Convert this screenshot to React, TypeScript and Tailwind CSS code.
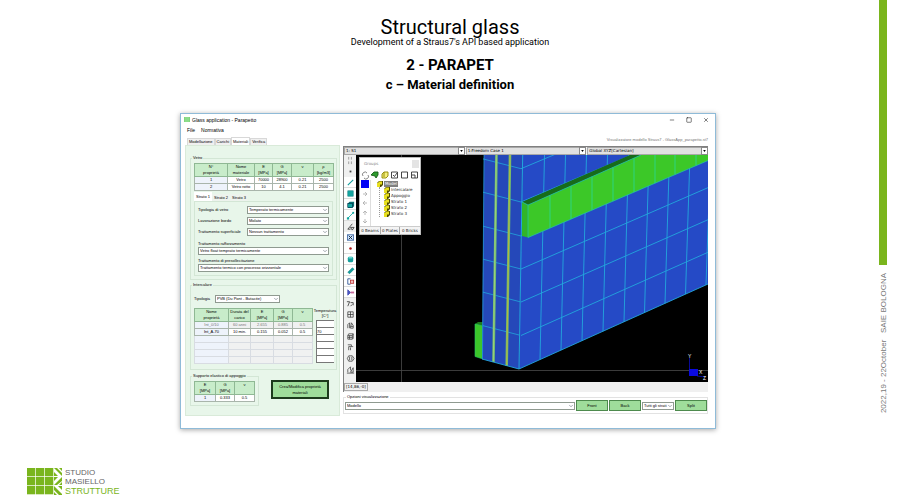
import { useState } from 'react';
import type { ReactNode } from 'react';
import { ChevronDown, Minus, Square, X } from 'lucide-react';

const CYAN = '#22a7dc';

// Drop-down with the thin chevron
function Select({ id, label, options, className = '' }: { id: string; label?: string; options: string[]; className?: string }) {
  return (
    <div className={`relative h-2 ${className}`}>
      <select
        id={id}
        aria-label={label}
        className="block h-full w-full appearance-none border border-[#8f9a90] bg-white pl-px text-[4px] leading-[6px] text-black"
      >
        {options.map((o) => (
          <option key={o}>{o}</option>
        ))}
      </select>
      <ChevronDown className="pointer-events-none absolute top-px right-px h-[6px] w-[6px] text-gray-600" strokeWidth={2} />
    </div>
  );
}

// Combo of the viewer's top bar
function BarCombo({ id, label, value }: { id: string; label: string; value: string }) {
  return (
    <div className="relative h-2 flex-1">
      <select
        id={id}
        aria-label={label}
        className="block h-full w-full appearance-none border border-[#a8a8a8] bg-[#e1e1e1] pl-px font-['DejaVu_Sans'] text-[4px] leading-[6px] text-black"
      >
        <option>{value}</option>
      </select>
      <span className="pointer-events-none absolute top-0 right-0 flex h-2 w-[7px] items-center justify-center border border-[#8a8a8a] bg-white">
        <svg viewBox="0 0 4 3" className="h-[2px] w-[3px]">
          <path d="M0 0h4L2 3z" fill="#000" />
        </svg>
      </span>
    </div>
  );
}

function Group({ title, className = '', children }: { title: string; className?: string; children: ReactNode }) {
  return (
    <fieldset className={`min-w-0 border border-[#d3e6d5] ${className}`}>
      <legend className="-ml-[2px] px-px leading-[6px]">{title}</legend>
      {children}
    </fieldset>
  );
}

type GridProps = { label: string; widths: string[]; head: string[][]; rows: string[][]; muted?: number; className?: string };

function DataTable({ label, widths, head, rows, muted = -1, className = '' }: GridProps) {
  return (
    <table aria-label={label} className={`table-fixed border-collapse text-center leading-[6px] ${className}`}>
      <colgroup>
        {widths.map((w, i) => (
          <col key={i} className={w} />
        ))}
      </colgroup>
      <thead>
        <tr className="h-[13px] bg-[#c8ecca]">
          {head.map((lines, i) => (
            <th key={i} className="border border-[#8fb894] p-0 align-top font-normal">
              {lines.map((l) => (
                <span key={l} className="block">{l}</span>
              ))}
            </th>
          ))}
        </tr>
      </thead>
      <tbody>
        {rows.map((row, r) => {
          const empty = row.every((c) => c === '');
          return (
            <tr key={r} className={r === muted ? 'h-[7px] text-[#777]' : 'h-[7px]'}>
              {row.map((cell, c) => (
                <td
                  key={c}
                  className={`border p-0 ${empty ? 'border-[#d8dce2]' : 'border-[#a9b5ab]'} ${
                    c === 0 ? 'bg-[#eef3fb]' : empty || r === muted ? 'bg-[#f0f1f1]' : 'bg-white'
                  }`}
                >
                  {cell}
                </td>
              ))}
            </tr>
          );
        })}
      </tbody>
    </table>
  );
}

function GreenButton({ children, className = '' }: { children: ReactNode; className?: string }) {
  return (
    <button type="button" className={`bg-[#9fdd9b] text-center leading-[6px] text-black ${className}`}>
      {children}
    </button>
  );
}

// Tools down the left edge of the viewer
const TOOLS: { name: string; light?: boolean; art: ReactNode }[] = [
  { name: 'Grip', art: <path d="M3 1v3M6 1v3M3 6v3M6 6v3" stroke="#999" fill="none" /> },
  { name: 'Node', art: <rect x="4" y="4" width="2" height="2" fill="#444" /> },
  { name: 'Beam', light: true, art: <path d="M2 8L8 2" stroke="#0f9a9a" strokeWidth="1.2" /> },
  { name: 'Plate', light: true, art: <rect x="2" y="2" width="6" height="6" fill="#16a5a0" stroke="#0b7f80" strokeWidth=".6" /> },
  { name: 'Brick', light: true, art: <><path d="M2 4l2-2h5v5L7 9H2z" fill="#0a6f70" /><rect x="2" y="4" width="5" height="4.5" fill="#16a5a0" stroke="#024" strokeWidth=".6" /></> },
  { name: 'Link', light: true, art: <><path d="M2 8L8 2" stroke="#16b0ac" strokeWidth="1" /><rect x="1" y="7" width="2.5" height="2.5" fill="#16a5a0" /><rect x="7" y="1" width="2" height="2" fill="#16a5a0" /></> },
  { name: 'Path', art: <path d="M2 8L7 2M2 8h3M5 6l2 3 2-3z" fill="none" stroke="#333" strokeWidth=".9" /> },
  { name: 'Select', light: true, art: <><rect x="1.5" y="2" width="7" height="6" fill="#cfe4ff" stroke="#234f94" strokeWidth=".8" /><path d="M3 3l4 4M7 3L3 7" stroke="#123" strokeWidth="1" /></> },
  { name: 'Point', light: true, art: <circle cx="5" cy="5" r="1.4" fill="#b01818" /> },
  { name: 'Cylinder', light: true, art: <><rect x="2" y="2" width="6" height="6" rx="1.5" fill="#159e9c" /><ellipse cx="5" cy="3" rx="2.5" ry="1" fill="#66d6d2" /></> },
  { name: 'Bar', light: true, art: <path d="M2 7L7 2l2 1.5-5 5z" fill="#159e9c" stroke="#0b7f80" strokeWidth=".6" /> },
  { name: 'Load', light: true, art: <><path d="M2 2h3M2 2v6h3" fill="none" stroke="#345a99" /><rect x="5" y="3.5" width="3.5" height="3.5" fill="#f0c0c0" stroke="#b33" strokeWidth=".9" /></> },
  { name: 'Support', light: true, art: <><path d="M2 2v6l3-3z" fill="#4b55bd" stroke="#4b55bd" /><path d="M5 4h4v2H5z" fill="#c66a9a" /></> },
  { name: 'Rotate', art: <path d="M1 3h3L2 8M5 4h3v3M5 8l2-2" fill="none" stroke="#333" strokeWidth=".9" /> },
  { name: 'Grid', art: <path d="M2 2h6v6H2zM5 2v6M2 5h6" fill="none" stroke="#333" strokeWidth=".8" /> },
  { name: 'Measure', art: <path d="M2 8V4l2-2v6M5 8l1-6 2 3v3zM5 6h3" fill="none" stroke="#333" strokeWidth=".8" /> },
  { name: 'Layers', art: <path d="M2 4l1-2h5v5L7 8H2zM2 4h5v4M4 4v4M2 6h5M7 4l1-2" fill="none" stroke="#333" strokeWidth=".8" /> },
  { name: 'Trim', art: <path d="M2 2h4v2H3v4M6 4h2M5 5v3" fill="none" stroke="#333" strokeWidth=".8" /> },
  { name: 'Box', art: <path d="M3 2h4l2 3-2 3H3L1.5 5zM4 3v4M6.5 3v4" fill="none" stroke="#333" strokeWidth=".8" /> },
  { name: 'Annotate', art: <path d="M2 8V5l3-3v4M5 8l3-5v5zM1 9h8" fill="none" stroke="#333" strokeWidth=".8" /> },
];

// Mesh lines of the glass panel
const ROWS = [168.7, 202, 236, 269, 302, 335.5];
const COLUMNS = [540, 561, 582, 603, 624, 644.5, 665, 685.5, 706];
const RAIL_COLUMNS = [550, 571, 592, 613, 634, 655, 675, 696];

function Model() {
  return (
    <svg viewBox="356 155 352 227" className="block w-full bg-black" role="img" aria-label="Modello">
      <path d="M401.5 155v227M356 370.5h352" stroke="#4a4a4a" strokeWidth=".8" />

      {/* lower support */}
      <path d="M475 324l3-2h6v38z" fill="#1c7a1c" />
      <path d="M475 324l8 2v33l-8-2.5z" fill="#3cc62a" stroke="#22c96a" strokeWidth=".6" />

      {/* side of the laminated panel */}
      <path d="M484 155h39l-4 214-37-10z" fill="#2548b9" />
      {ROWS.map((y) => (
        <path key={y} d={`M483 ${y - 9.8}L521 ${y}`} stroke={CYAN} strokeWidth=".8" />
      ))}
      <path d="M496.5 155L493.5 362M510 155L506.7 366" stroke="#6fbb72" strokeWidth="2.6" />
      <path d="M496.3 155L493.3 362" stroke="#a9d67c" strokeWidth=".8" />
      <path d="M510 155L506.7 366" stroke="#b7b93a" strokeWidth="1" />
      <path d="M484 155L482.5 359" stroke={CYAN} strokeWidth=".7" />

      {/* front face */}
      <path d="M522.7 155H708v129L519 369z" fill="#254ac6" />
      {ROWS.map((y, i) => (
        <path key={y} d={`M521 ${y}L708 ${y - 187 * (0.42 + i * 0.005)}`} stroke={CYAN} strokeWidth=".9" />
      ))}
      {COLUMNS.map((x) => (
        <path key={x} d={`M${x + 4.5} 155L${x} ${369 - (x - 519) * 0.45}`} stroke={CYAN} strokeWidth=".9" />
      ))}
      <path d="M522.7 155L519 369" stroke={CYAN} strokeWidth="1" />
      <path d="M482 359l37 10 189-85" fill="none" stroke={CYAN} strokeWidth=".9" />

      {/* handrail */}
      <path d="M522 202L630 155h11L528 205z" fill="#176b1a" />
      <path d="M522 202l6 3v32.500l-6-1.500z" fill="#31b529" />
      <path d="M528 205L641 155h67v5.500L528 237.500z" fill="#3cc828" />
      {RAIL_COLUMNS.map((x) => (
        <path
          key={x}
          d={`M${x} ${Math.max(155, 205 - (x - 528) * 0.4425)}L${x} ${237.5 - (x - 528) * 0.428}`}
          stroke="#2bd68a"
          strokeWidth=".9"
        />
      ))}
      <path d="M641 155L528 205v32.500L708 160.500M522 202l6 3" fill="none" stroke="#25c3a0" strokeWidth=".8" />

      {/* axes */}
      <path d="M689.5 358v12M697 376l8 1" stroke="#0b0ba8" strokeWidth=".9" />
      <rect x="689" y="369" width="9" height="7" fill="#0a0ae0" />
      <g fill="#fff" fontSize="5" fontFamily="Liberation Sans, sans-serif">
        <text x="688" y="358">Y</text>
        <text x="699" y="374">X</text>
        <text x="703" y="380">Z</text>
      </g>
    </svg>
  );
}

function Folder() {
  return (
    <svg viewBox="0 0 6 6" className="h-[6px] w-[6px] shrink-0">
      <path d="M0 2l2-2h4v4L4 6H0z" fill="#4d4a00" />
      <path d="M0 2h3v4H0zM2 .5h3v3H3V2H1z" fill="#e8e020" />
    </svg>
  );
}

function GroupsPalette() {
  return (
    <div className="absolute top-[3px] left-[4px] w-[60px] bg-white font-['DejaVu_Sans'] text-[4px] text-[#222] outline outline-[#bbb]">
      <div className="flex h-3 items-center justify-between pl-1 text-[#888]">
        <span>Groups</span>
        <button type="button" aria-label="Chiudi" className="mr-px h-2 w-[7px] bg-[#e4e4e4]" />
      </div>
      <svg viewBox="0 0 60 10" className="block h-[10px] w-full" fill="none" strokeWidth=".9">
        <path d="M3 6a2.500 2.500 0 0 1 4-3M8 5a2.500 2.500 0 0 1-4 3" stroke="#777" />
        <path d="M11 5l3-3h4v3l-2 3-1-2z" fill="#2f9c2f" stroke="#175c17" />
        <path d="M22 4l2-2h4v4l-2 2h-4zM24 2v5" fill="#f5ef7a" stroke="#8f8700" />
        <path d="M31.500 2h6v6h-6zM33 5l1.500 1.500L37 3M41.500 2h6v6h-6zM51.500 2h6v6h-6zM52 5h3v3" stroke="#333" />
      </svg>
      <div className="flex h-[46px]">
        <svg viewBox="0 0 10 46" className="block h-[46px] w-[11px] border-r border-[#ddd]">
          <rect x="1" y="0" width="8" height="8" fill="#0000f5" />
          <path d="M3 14h4M5 12l2 2-2 2M7 23H3M5 21l-2 2 2 2M5 35v-4M3 33l2-2 2 2M5 39v4M3 41l2 2 2-2" fill="none" stroke="#aaa" strokeWidth=".8" />
        </svg>
        <ul className="pt-px leading-[6px]">
          <li>
            <span className="flex gap-px pl-[6px]">
              <Folder />
              <span className="bg-[#808080] px-px text-white">Model</span>
            </span>
            <ul className="ml-2 border-l border-dotted border-[#999] pl-1">
              {['Intercalare', 'Appoggio', 'Strato 1', 'Strato 2', 'Strato 3'].map((n) => (
                <li key={n} className="flex gap-px">
                  <Folder />
                  {n}
                </li>
              ))}
            </ul>
          </li>
        </ul>
      </div>
      <div className="grid h-2 grid-cols-3 border-t border-[#ccc] bg-[#f4f4f4] text-center leading-[7px]">
        <span>0 Beams</span>
        <span className="border-x border-[#aaa]">0 Plates</span>
        <span>0 Bricks</span>
      </div>
    </div>
  );
}

function MaterialsPanel() {
  const [tab, setTab] = useState('Materiali');
  const [strato, setStrato] = useState('Strato 1');

  return (
    <section className="w-[155px] shrink-0 pt-[2px]">
      <div className="flex h-2 items-end pl-[2px]">
        {['Modellazione', 'Carichi', 'Materiali', 'Verifica'].map((t) => (
          <button
            key={t}
            type="button"
            onClick={() => setTab(t)}
            className={`border border-b-0 border-[#d8d8d8] px-px leading-[6px] ${t === tab ? 'h-2 bg-white' : 'h-[7px] bg-[#f0f0f0]'}`}
          >
            {t}
          </button>
        ))}
      </div>

      <div className="border border-[#d9ead9] bg-[#e8f6ea] pt-[9px] pr-[2px] pb-[9px] pl-1">
        <Group title="Vetro" className="px-[3px] pb-[3px]">
          <DataTable
            label="Vetro"
            className="mt-[2px] w-full"
            widths={['w-[33px]', 'w-[27px]', 'w-[18px]', 'w-[19px]', 'w-[22px]', 'w-[20px]']}
            head={[['N°', 'proprietà'], ['Nome', 'materiale'], ['E', '[MPa]'], ['G', '[MPa]'], ['ν'], ['ρ', '[kg/m3]']]}
            rows={[
              ['1', 'Vetro', '70000', '28900', '0.21', '2500'],
              ['2', 'Vetro rotto', '10', '4.1', '0.21', '2500'],
            ]}
          />
          <div className="mt-px flex h-[9px] items-end">
            {['Strato 1', 'Strato 2', 'Strato 3'].map((s) => (
              <button
                key={s}
                type="button"
                onClick={() => setStrato(s)}
                className={`px-[2px] leading-[6px] ${s === strato ? 'h-[9px] bg-white' : 'h-[7px] bg-[#edf3ed]'}`}
              >
                {s}
              </button>
            ))}
          </div>
          <div className="border border-[#d3e6d5] px-[3px] pt-[4px] pb-[3px]">
            <div className="grid grid-cols-[49px_1fr] items-center gap-y-[3px]">
              <label htmlFor="tipo-vetro">Tipologia di vetro</label>
              <Select id="tipo-vetro" options={['Temperato termicamente']} />
              <label htmlFor="bordo">Lavorazione bordo</label>
              <Select id="bordo" options={['Molato']} />
              <label htmlFor="superficie">Trattamento superficiale</label>
              <Select id="superficie" options={['Nessun trattamento']} />
            </div>
            <label htmlFor="rafforzamento" className="mt-[5px] block">Trattamento rafforzamento</label>
            <Select id="rafforzamento" options={['Vetro float temprato termicamente']} />
            <label htmlFor="presoll" className="mt-[3px] block">Trattamento di presollecitazione</label>
            <Select id="presoll" options={['Trattamento termico con processo orizzontale']} />
          </div>
        </Group>

        <Group title="Intercalare" className="mt-[2px] px-[3px] pb-[5px]">
          <div className="mt-[7px] flex items-center">
            <label htmlFor="tipo-inter" className="w-[21px]">Tipologia</label>
            <Select id="tipo-inter" className="w-[65px]" options={['PVB (Du Pont - Butacite)']} />
          </div>
          <div className="mt-[5px] flex gap-[3px]">
            <DataTable
              label="Intercalare"
              className="w-[118px]"
              widths={['w-[34px]', 'w-[22px]', 'w-[23px]', 'w-[19px]', 'w-[20px]']}
              head={[['Nome', 'proprietà'], ['Durata del', 'carico'], ['E', '[MPa]'], ['G', '[MPa]'], ['ν']]}
              rows={[
                ['Int_0/10', '60 anni', '2.655', '0.885', '0.5'],
                ['Int_A-70', '10 min.', '0.155', '0.052', '0.5'],
                ['', '', '', '', ''],
                ['', '', '', '', ''],
                ['', '', '', '', ''],
                ['', '', '', '', ''],
              ]}
              muted={0}
            />
            <div className="w-[18px]">
              <div className="flex h-3 flex-col items-center leading-[5px]">
                <span>Temperatura</span>
                <span>[C°]</span>
              </div>
              {['', '70', '', '', '', ''].map((v, i) => (
                <input
                  key={i}
                  aria-label={`Temperatura ${i + 1}`}
                  defaultValue={v}
                  className="block h-[7px] w-full border-t border-l border-[#777] bg-white text-[4px] leading-[6px] last:h-2 last:border-b"
                />
              ))}
            </div>
          </div>
        </Group>

        <div className="mt-[3px] flex items-center">
          <Group title="Supporto elastico di appoggio" className="w-[69px] px-[3px] pb-[3px]">
            <DataTable
              label="Supporto elastico di appoggio"
              className="mt-[2px] w-full"
              widths={['w-[21px]', 'w-[19px]', 'w-[20px]']}
              head={[['E', '[MPa]'], ['G', '[MPa]'], ['ν']]}
              rows={[['1', '0.333', '0.5']]}
            />
          </Group>
          <GreenButton className="ml-3 h-[19px] w-[58px] border-2 border-[#1c3a1c] whitespace-normal">
            Crea/Modifica proprietà materiali
          </GreenButton>
        </div>
      </div>
    </section>
  );
}

function Viewer() {
  return (
    <section className="min-w-0 flex-1 pt-[2px]">
      <p className="text-right leading-[6px] text-[#777]">Visualizzatore modello Straus7 - GlassApp_parapetto.st7</p>
      <div className="mt-[3px] border-t border-l border-[#808080] bg-[#f0f0f0]">
        <div className="flex h-2 gap-px">
          <BarCombo id="step" label="Risultato" value="1: S1" />
          <BarCombo id="case" label="Caso" value="1:Freedom Case 1" />
          <BarCombo id="ucs" label="Riferimento" value="Global XYZ[Cartesian]" />
        </div>
        <div className="flex">
          <div className="flex w-3 shrink-0 flex-col">
            {TOOLS.map((t) => (
              <button
                key={t.name}
                type="button"
                aria-label={t.name}
                className={`flex h-[11px] items-center justify-center ${t.light ? 'border-b border-[#ddd] bg-white' : ''}`}
              >
                <svg viewBox="0 0 10 10" className="h-[9px] w-[9px]">{t.art}</svg>
              </button>
            ))}
          </div>
          <div className="relative min-w-0 flex-1 self-start">
            <Model />
            <GroupsPalette />
          </div>
        </div>
        <div className="h-[10px] pt-px">
          <span className="block h-2 w-fit border border-[#aaa] px-px font-['DejaVu_Sans'] text-[4px] leading-[6px]">[14,86,-0]</span>
        </div>
      </div>

      <fieldset className="mt-[2px] border border-[#e2e2e2] pb-[2px] pl-px">
        <legend className="ml-px px-px leading-[6px]">Opzioni visualizzazione</legend>
        <div className="flex items-center gap-px">
          <Select id="vista" label="Opzioni visualizzazione" className="flex-1" options={['Modello']} />
          <GreenButton className="h-[11px] w-8 border border-[#4d8a4d]">Front</GreenButton>
          <GreenButton className="h-[11px] w-8 border border-[#4d8a4d]">Back</GreenButton>
          <Select id="strati" label="Strati" className="w-8" options={['Tutti gli strati']} />
          <GreenButton className="h-[11px] w-8 border border-[#4d8a4d]">Split</GreenButton>
        </div>
      </fieldset>
    </section>
  );
}

function AppWindow() {
  return (
    <div className="mt-[18px] mr-[163px] ml-[180px] border border-[#8fbbd8] bg-white font-['Liberation_Sans',sans-serif] text-[4px] leading-[6px] whitespace-nowrap text-black shadow-[0_1px_5px_rgba(0,0,0,0.35)]">
      <div className="flex h-[11px] items-center pl-[3px] text-[5px]">
        <svg viewBox="0 0 6 5" className="h-[5px] w-[6px]">
          <path d="M0 0h6v5H0z" fill="#7fd67c" />
          <path d="M2 0v5M4 0v5" stroke="#b9edb5" strokeWidth=".5" />
        </svg>
        <span className="ml-[2px]">Glass application - Parapetto</span>
        <div className="mr-[6px] ml-auto flex gap-[11px]">
          <button type="button" aria-label="Riduci"><Minus className="h-[6px] w-[6px]" /></button>
          <button type="button" aria-label="Ingrandisci"><Square className="h-[6px] w-[6px]" /></button>
          <button type="button" aria-label="Chiudi"><X className="h-[6px] w-[6px]" /></button>
        </div>
      </div>
      <nav className="flex h-[10px] items-center gap-[6px] pl-[6px] text-[5px]">
        <button type="button">File</button>
        <button type="button">Normativa</button>
      </nav>
      <div className="flex gap-[3px] pr-[7px] pb-3 pl-1">
        <MaterialsPanel />
        <Viewer />
      </div>
    </div>
  );
}

function Logo() {
  return (
    <div className="flex items-center gap-[3px]">
      <svg viewBox="0 0 35 28" className="h-7 w-[35px]" fill="#7ab51d">
        {[0, 9, 18].map((y) =>
          [0, 9, 18].map((x) => <rect key={`${x}-${y}`} x={x} y={y} width="8.3" height="8.3" />)
        )}
        <path d="M27 0h3l5 5v3zM32 0h3v3zM27 4l4 4h-4zM27 17l8-8v4l-5 4zM27 9h4l-4 4zM32 17h3v-3zM27 18l8 8v1h-3l-5-5zM31 18h4v4zM27 24l3 3h-3z" />
      </svg>
      <div className="font-['Liberation_Sans',sans-serif] text-[8px] leading-[9px] text-[#666]">
        <p>STUDIO</p>
        <p>MASIELLO</p>
        <p className="text-[9px] leading-[10px] text-[#7ab51d]">STRUTTURE</p>
      </div>
    </div>
  );
}

export default function App() {
  return (
    <div className="flex min-h-screen bg-white">
      <main className="flex min-w-0 flex-1 flex-col">
        <header className="pt-[17px] pl-[21px] text-center text-black">
          <h1 className="font-['Roboto',sans-serif] text-[20px] leading-5">Structural glass</h1>
          <p className="mt-px font-['Roboto',sans-serif] text-[9px] leading-[9px]">Development of a Straus7's API based application</p>
          <h2 className="mt-2 font-['Roboto',sans-serif] text-[15px] leading-5 font-bold">2 - PARAPET</h2>
          <h3 className="font-['Roboto',sans-serif] text-[13px] leading-5 font-bold">c – Material definition</h3>
        </header>
        <AppWindow />
        <footer className="mt-auto pb-[7px] pl-[27px]">
          <Logo />
        </footer>
      </main>

      <aside className="flex w-[21px] shrink-0 flex-col items-start">
        <div className="h-[265px] w-2 bg-[#7ab51d]" />
        <p className="mt-2 rotate-180 font-['Liberation_Sans',sans-serif] text-[8px] leading-[9px] whitespace-pre text-[#777] [writing-mode:vertical-rl]">
          {'2022,19 - 22October   SAIE BOLOGNA'}
        </p>
      </aside>
    </div>
  );
}
